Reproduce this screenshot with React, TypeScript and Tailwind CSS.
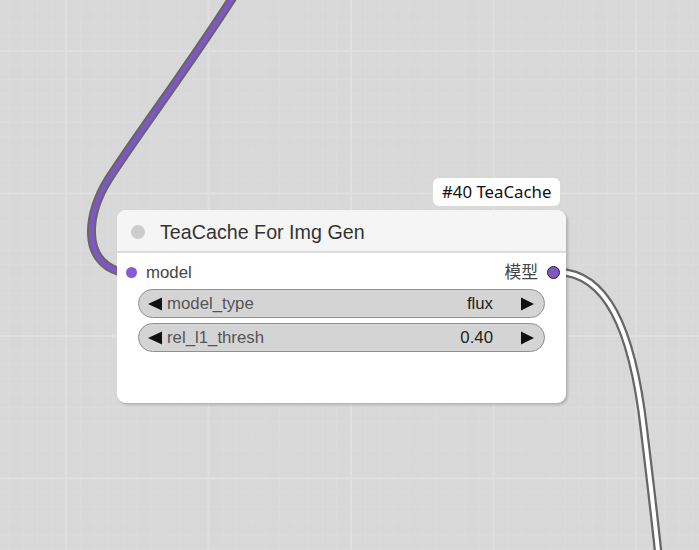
import React from 'react'

const minor = [1, 2, 3, 4, 5, 6, 7, 8, 9]

const GridBackground = () => (
  <svg className="absolute inset-0 w-full h-full" width="699" height="550">
    <defs>
      <pattern id="grid" x="65" y="50" width="142.5" height="142.5" patternUnits="userSpaceOnUse">
        <rect width="142.5" height="142.5" fill="#d8d8d8" />
        {minor.map((i) => (
          <React.Fragment key={i}>
            <rect x={1 + i * 14.25 - 0.5} y="0" width="1" height="142.5" fill="#dcdcdc" />
            <rect x="0" y={1 + i * 14.25 - 0.5} width="142.5" height="1" fill="#dcdcdc" />
          </React.Fragment>
        ))}
        <rect x="0" y="0" width="2" height="142.5" fill="#dfdfdf" />
        <rect x="0" y="0" width="142.5" height="2" fill="#dfdfdf" />
      </pattern>
    </defs>
    <rect width="699" height="550" fill="url(#grid)" />
  </svg>
)

const leftLink = 'M 250 -30 C 205 45, 140 130, 108 180 C 88 212, 80 260, 120 272'
const rightLink = 'M 558 272 C 605 273, 632 325, 644 430 C 650 480, 655 520, 660 570'

const Links = () => (
  <svg className="absolute inset-0 w-full h-full" width="699" height="550" fill="none">
    <path d={leftLink} stroke="#666666" strokeWidth="9" />
    <path d={leftLink} stroke="#7e57c2" strokeWidth="5" />
    <path d={rightLink} stroke="#666666" strokeWidth="8.5" />
    <path d={rightLink} stroke="#ffffff" strokeWidth="4" />
  </svg>
)

const Arrow = ({ dir }: { dir: 'left' | 'right' }) => (
  <svg width="14" height="14" viewBox="0 0 14 14" className="shrink-0">
    {dir === 'left' ? (
      <polygon points="14,0.5 14,13.5 0,7" fill="#111" />
    ) : (
      <polygon points="0,0.5 0,13.5 13,7" fill="#111" />
    )}
  </svg>
)

const Widget = ({ name, value }: { name: string; value: string }) => (
  <div className="flex items-center h-[29px] rounded-full border border-[#8f8f8f] bg-[#d4d4d4] pl-[9px] pr-[9px] text-[16.8px] font-['Liberation_Sans',Arial,sans-serif]">
    <Arrow dir="left" />
    <span className="ml-[5px] text-[#555]">{name}</span>
    <span className="ml-auto text-[#222]">{value}</span>
    <span className="ml-[28px] flex">
      <Arrow dir="right" />
    </span>
  </div>
)

export default function App() {
  return (
    <div className="relative w-[699px] h-[550px] overflow-hidden bg-[#d8d8d8]">
      <GridBackground />
      <Links />

      {/* node badge */}
      <div className="absolute left-[433px] top-[178px] h-[28px] px-[9px] flex items-center rounded-[6px] bg-white text-[16.8px] text-[#111] font-['Noto_Sans',sans-serif]">
        #40 TeaCache
      </div>

      {/* node */}
      <div className="absolute left-[117px] top-[210px] w-[449px] h-[193px] rounded-[9px] bg-white shadow-[2px_2px_3px_rgba(0,0,0,0.18)] flex flex-col overflow-hidden">
        <div className="h-[43px] shrink-0 flex items-center bg-[#f5f5f5] border-b-[2px] border-[#dddddd] pl-[14px] pt-[2px]">
          <span className="w-[14px] h-[14px] rounded-full bg-[#cccccc]" />
          <span className="ml-[15px] mt-[2px] text-[19.7px] text-[#333] font-['Liberation_Sans',Arial,sans-serif]">
            TeaCache For Img Gen
          </span>
        </div>

        <div className="flex flex-col px-[21px]">
          <div className="relative h-[36px] flex items-center pt-[3px] text-[16.8px] text-[#444] font-['Liberation_Sans',Arial,sans-serif]">
            <span className="absolute left-[-12px] w-[11px] h-[11px] rounded-full bg-[#8a5ad0]" />
            <span className="ml-[8px]">model</span>
            <span className="ml-auto mr-[7px] font-['Liberation_Sans','Noto_Sans_CJK_SC',sans-serif]">模型</span>
            <span className="absolute right-[-15px] w-[13px] h-[13px] rounded-full bg-[#7e57c2] border border-[#222]" />
          </div>
          <div className="flex flex-col gap-[5px]">
            <Widget name="model_type" value="flux" />
            <Widget name="rel_l1_thresh" value="0.40" />
          </div>
        </div>
      </div>
    </div>
  )
}
